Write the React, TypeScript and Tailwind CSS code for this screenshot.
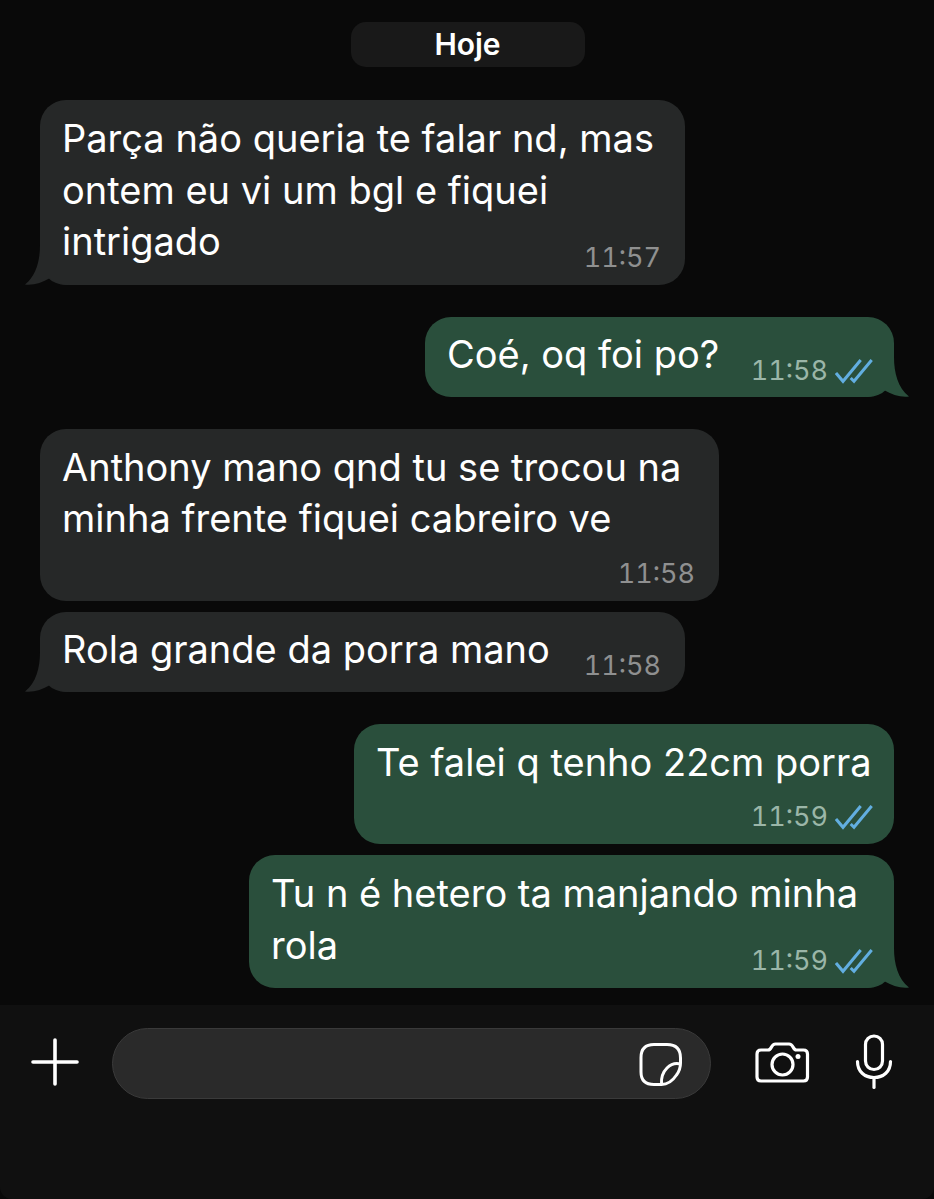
import type { ReactNode } from 'react'

const font = { fontFamily: 'Inter, "Liberation Sans", sans-serif' }

function Checks() {
  return (
    <svg width="38" height="26" viewBox="0 0 38 26" fill="none" stroke="#62aee0" strokeWidth="3">
      <path d="M1 15l7 8.300L25.700 2" />
      <path d="M15.700 20l3.300 3.300L36.700 2" />
    </svg>
  )
}

function Tail({ mine, color }: { mine: boolean; color: string }) {
  if (mine) {
    return (
      <svg className="absolute bottom-0 right-[-15px]" width="44" height="40" viewBox="0 0 44 40" fill={color}>
        <path d="M29 0c0 16 4 31 15 39.500-8 1-17-1.500-25-6.500-5 4-11 7-19 7V0z" />
      </svg>
    )
  }
  return (
    <svg className="absolute bottom-0 left-[-15px]" width="44" height="40" viewBox="0 0 44 40" fill={color}>
      <path d="M15 0C15 16 11 31 0 39.500c8 1 17-1.500 25-6.500 5 4 11 7 19 7V0z" />
    </svg>
  )
}

interface BubbleProps {
  time: string
  mine?: boolean
  tail?: boolean
  width: string
  children: ReactNode
  inline?: boolean
  overlap?: boolean
}

function Bubble({ time, mine = false, tail = false, width, children, inline = false, overlap = false }: BubbleProps) {
  const color = mine ? '#2a4f3c' : '#262828'
  return (
    <div className={`flex ${mine ? 'justify-end pr-10' : 'pl-10'}`}>
      <div className={`relative rounded-[26px] ${mine ? 'bg-[#2a4f3c]' : 'bg-[#262828]'} ${width}`}>
        {tail && <Tail mine={mine} color={color} />}
        <div className={`relative flex pl-[22px] ${mine ? 'pr-[21px]' : 'pr-[24px]'} ${inline ? 'h-[80px] justify-between pt-[12px]' : 'flex-col pt-[13px] pb-[11px]'}`}>
          <div className="text-[38px] leading-[51.500px] text-white">{children}</div>
          <div
            className={`flex items-center justify-end gap-[7px] text-[27px] leading-[32px] tabular-nums ${mine ? 'text-[#9bb6a8]' : 'text-[#8f9090]'} ${inline ? 'mt-[17px]' : overlap ? '-mt-[26px]' : 'mt-[13px]'}`}
          >
            {time}
            {mine && <Checks />}
          </div>
        </div>
      </div>
    </div>
  )
}

function StickerIcon() {
  return (
    <svg width="44" height="44" viewBox="0 0 44 44" fill="none" stroke="white" strokeWidth="3" strokeLinejoin="round">
      <path d="M15 2.500h13c9 0 13.500 5 13.500 13.500v5c0 4-1 8-4 12-4 6-10 9.500-15 9.500h-7.500C6.500 42.500 2 38 2 30V15.500C2 7 6.500 2.500 15 2.500z" />
      <path d="M41.500 22c-4-1-9.500 0-13.500 4-4 4-6 10-5.500 16.500" />
    </svg>
  )
}

function CameraIcon() {
  return (
    <svg width="56" height="44" viewBox="0 0 56 44" fill="none" stroke="white" strokeWidth="3.200">
      <path d="M6 8h7c1.500 0 2.500-1 3.500-3 1-2 2-3 4-3h13.500c2 0 3 1 4 3 1 2 2 3 3.500 3h7c2.500 0 4 1.500 4 4v23c0 2.500-1.500 4-4 4H6c-2.500 0-4-1.500-4-4V12c0-2.500 1.500-4 4-4z" />
      <circle cx="27.500" cy="22.500" r="10.500" />
      <circle cx="43" cy="14.500" r="2.500" fill="white" stroke="none" />
    </svg>
  )
}

function MicIcon() {
  return (
    <svg width="40" height="60" viewBox="0 0 40 60" fill="none" stroke="white" strokeWidth="3.200" strokeLinecap="round">
      <rect x="10.500" y="2" width="17" height="33.500" rx="8.500" />
      <path d="M2.500 27.500c0 10 7 16 16.500 16s16.500-6 16.500-16" />
      <path d="M19 43.500v10" />
    </svg>
  )
}

export default function App() {
  return (
    <div className="flex h-[1199px] w-[934px] flex-col overflow-hidden bg-[#090909]" style={font}>
      <div className="flex flex-1 flex-col pt-[22px]">
        <div className="mb-[33px] flex justify-center pl-[1px]">
          <div className="flex h-[45px] w-[234px] items-center justify-center rounded-[15px] bg-[#191919] text-[30px] font-semibold text-white">
            Hoje
          </div>
        </div>

        <Bubble time="11:57" tail overlap width="w-[645px]">
          Parça não queria te falar nd, mas
          <br />
          ontem eu vi um bgl e fiquei
          <br />
          intrigado
        </Bubble>

        <div className="mt-[32px]">
          <Bubble time="11:58" mine tail inline width="w-[469px]">
            Coé, oq foi po?
          </Bubble>
        </div>

        <div className="mt-[32px]">
          <Bubble time="11:58" width="w-[679px]">
            Anthony mano qnd tu se trocou na
            <br />
            minha frente fiquei cabreiro ve
          </Bubble>
        </div>

        <div className="mt-[11px]">
          <Bubble time="11:58" tail inline width="w-[645px]">
            Rola grande da porra mano
          </Bubble>
        </div>

        <div className="mt-[32px]">
          <Bubble time="11:59" mine width="w-[540px]">
            Te falei q tenho 22cm porra
          </Bubble>
        </div>

        <div className="mt-[11px]">
          <Bubble time="11:59" mine tail overlap width="w-[645px]">
            Tu n é hetero ta manjando minha
            <br />
            rola
          </Bubble>
        </div>
      </div>

      <div className="flex h-[194px] items-start rounded-b-[12px] bg-[#101010] pt-[23px]">
        <div className="flex h-[71px] w-[112px] items-center justify-center pr-[2px] pb-[3px]">
          <svg width="48" height="48" viewBox="0 0 48 48" stroke="white" strokeLinecap="round" strokeWidth="3.600">
            <path d="M24 2v44" />
            <path d="M2 24h44" />
          </svg>
        </div>
        <div className="flex h-[71px] w-[599px] items-center justify-end rounded-[36px] border border-[#3a3a3a] bg-[#2a2a2a] pr-[27px]">
          <StickerIcon />
        </div>
        <div className="flex h-[71px] items-center pl-[44px]">
          <CameraIcon />
        </div>
        <div className="flex h-[71px] items-center pl-[44px]">
          <MicIcon />
        </div>
      </div>
    </div>
  )
}
